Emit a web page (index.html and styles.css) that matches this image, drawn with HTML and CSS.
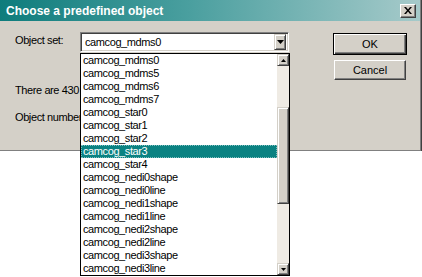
FILE: index.html
```html
<!DOCTYPE html>
<html>
<head>
<meta charset="utf-8">
<link rel="stylesheet" href="styles.css">
</head>
<body>
<div class="dialog">
  <div class="titlebar">
    <span class="title">Choose a predefined object</span>
    <span class="close"><svg width="8" height="7" viewBox="0 0 8 7"><path d="M0 0h2l2 2.5L6 0h2L5 3.5 8 7H6L4 4.5 2 7H0l3-3.5z" fill="#000"/></svg></span>
  </div>
  <div class="body">
    <div class="form">
      <div class="row1">
        <span class="label">Object set:</span>
        <div class="combo">
          <span class="combo-text">camcog_mdms0</span>
          <span class="dd-btn"><svg width="7" height="4" viewBox="0 0 7 4"><path d="M0 0h7L3.5 4z" fill="#000"/></svg></span>
        </div>
      </div>
      <div class="info">There are 430</div>
      <div class="info num">Object number</div>
    </div>
    <div class="buttons">
      <div class="btn default">OK</div>
      <div class="btn">Cancel</div>
    </div>
  </div>
</div>
<div class="dropdown">
  <ul class="items">
    <li>camcog_mdms0</li>
    <li>camcog_mdms5</li>
    <li>camcog_mdms6</li>
    <li>camcog_mdms7</li>
    <li>camcog_star0</li>
    <li>camcog_star1</li>
    <li>camcog_star2</li>
    <li class="sel"><span>camcog_star3</span></li>
    <li>camcog_star4</li>
    <li>camcog_nedi0shape</li>
    <li>camcog_nedi0line</li>
    <li>camcog_nedi1shape</li>
    <li>camcog_nedi1line</li>
    <li>camcog_nedi2shape</li>
    <li>camcog_nedi2line</li>
    <li>camcog_nedi3shape</li>
    <li>camcog_nedi3line</li>
  </ul>
  <div class="scrollbar">
    <div class="sb-btn"><svg width="5" height="3" viewBox="0 0 5 3"><path d="M2.5 0L5 3H0z" fill="#000"/></svg></div>
    <div class="track t1"></div>
    <div class="thumb"></div>
    <div class="track t2"></div>
    <div class="sb-btn"><svg width="5" height="3" viewBox="0 0 5 3"><path d="M0 0h5L2.5 3z" fill="#000"/></svg></div>
  </div>
</div>
</body>
</html>
```
FILE: styles.css
```css
html, body {
  margin: 0;
  padding: 0;
  background: #fff;
}
body {
  width: 422px;
  height: 277px;
  overflow: hidden;
  position: relative;
  font-family: "Liberation Sans", Arial, sans-serif;
  font-size: 11px;
  letter-spacing: -0.4px;
  color: #000;
}
.dialog {
  width: 420px;
  height: 150px;
  background: #d4d0c8;
  border-right: 1px solid #808080;
  box-shadow: 1px 0 0 #404040;
  border-bottom: 1px solid #808080;
  display: flex;
  flex-direction: column;
}
.titlebar {
  height: 21px;
  background: linear-gradient(to right, #0e7c7c 0%, #4a9f9f 45%, #a6caca 100%);
  display: flex;
  align-items: center;
  padding: 0 4px 0 6px;
}
.title {
  flex: 1;
  color: #fff;
  font-weight: bold;
  font-size: 12px;
  letter-spacing: 0;
}
.close {
  width: 14px;
  height: 12px;
  background: #d4d0c8;
  border: 1px solid;
  border-color: #fff #404040 #404040 #fff;
  box-shadow: inset -1px -1px #808080;
  display: flex;
  align-items: center;
  justify-content: center;
}
.body {
  flex: 1;
  display: flex;
  padding: 11px 13px 0 15px;
}
.form {
  flex: 1;
  display: flex;
  flex-direction: column;
}
.row1 {
  display: flex;
  align-items: flex-start;
}
.label {
  width: 65px;
  line-height: 13px;
  padding-top: 2px;
}
.combo {
  width: 204px;
  height: 16px;
  background: #fff;
  border: 1px solid;
  border-color: #808080 #fff #fff #808080;
  box-shadow: inset 1px 1px #404040, inset -1px -1px #d4d0c8;
  padding: 1px 2px 1px 1px;
  display: flex;
  align-items: center;
}
.combo-text {
  flex: 1;
  padding-left: 3px;
  line-height: 13px;
}
.dd-btn {
  width: 10px;
  height: 14px;
  background: #d4d0c8;
  border: 1px solid;
  border-color: #d4d0c8 #404040 #404040 #d4d0c8;
  box-shadow: inset 1px 1px #fff, inset -1px -1px #808080;
  display: flex;
  align-items: center;
  justify-content: center;
}
.info {
  width: 65px;
  overflow: hidden;
  line-height: 13px;
  margin-top: 32px;
  white-space: nowrap;
}
.info.num {
  margin-top: 14px;
}
.buttons {
  display: flex;
  flex-direction: column;
  gap: 5px;
  padding-top: 1px;
}
.btn {
  width: 70px;
  height: 18px;
  background: #d4d0c8;
  border: 1px solid;
  border-color: #fff #404040 #404040 #fff;
  box-shadow: inset -1px -1px #808080;
  display: flex;
  align-items: center;
  justify-content: center;
  letter-spacing: 0;
}
.btn.default {
  width: 72px;
  height: 20px;
  border: 1px solid #000;
  box-shadow: inset 1px 1px #fff, inset -1px -1px #404040, inset -2px -2px #808080;
}
.btn:not(.default) {
  margin-left: 1px;
}
.dropdown {
  position: absolute;
  left: 80px;
  top: 53px;
  width: 208px;
  height: 221px;
  border: 1px solid #000;
  background: #fff;
  display: flex;
}
.items {
  flex: 1;
  list-style: none;
  margin: 0;
  padding: 0;
}
.items li {
  height: 13px;
  line-height: 13px;
  padding-left: 2px;
  white-space: nowrap;
}
.items li.sel {
  background: #0b8282;
  color: #fff;
  outline: 1px dotted #7fc0c0;
  outline-offset: -1px;
}
.scrollbar {
  width: 12px;
  display: flex;
  flex-direction: column;
  background: #efebe4;
}
.sb-btn {
  width: 10px;
  height: 10px;
  background: #d4d0c8;
  border: 1px solid;
  border-color: #d4d0c8 #404040 #404040 #d4d0c8;
  box-shadow: inset 1px 1px #fff, inset -1px -1px #808080;
  display: flex;
  align-items: center;
  justify-content: center;
}
.track.t1 { height: 41px; }
.track.t2 { height: 59px; }
.thumb {
  width: 10px;
  height: 95px;
  background: #d4d0c8;
  border: 1px solid;
  border-color: #d4d0c8 #404040 #404040 #d4d0c8;
  box-shadow: inset 1px 1px #fff, inset -1px -1px #808080;
}
```
